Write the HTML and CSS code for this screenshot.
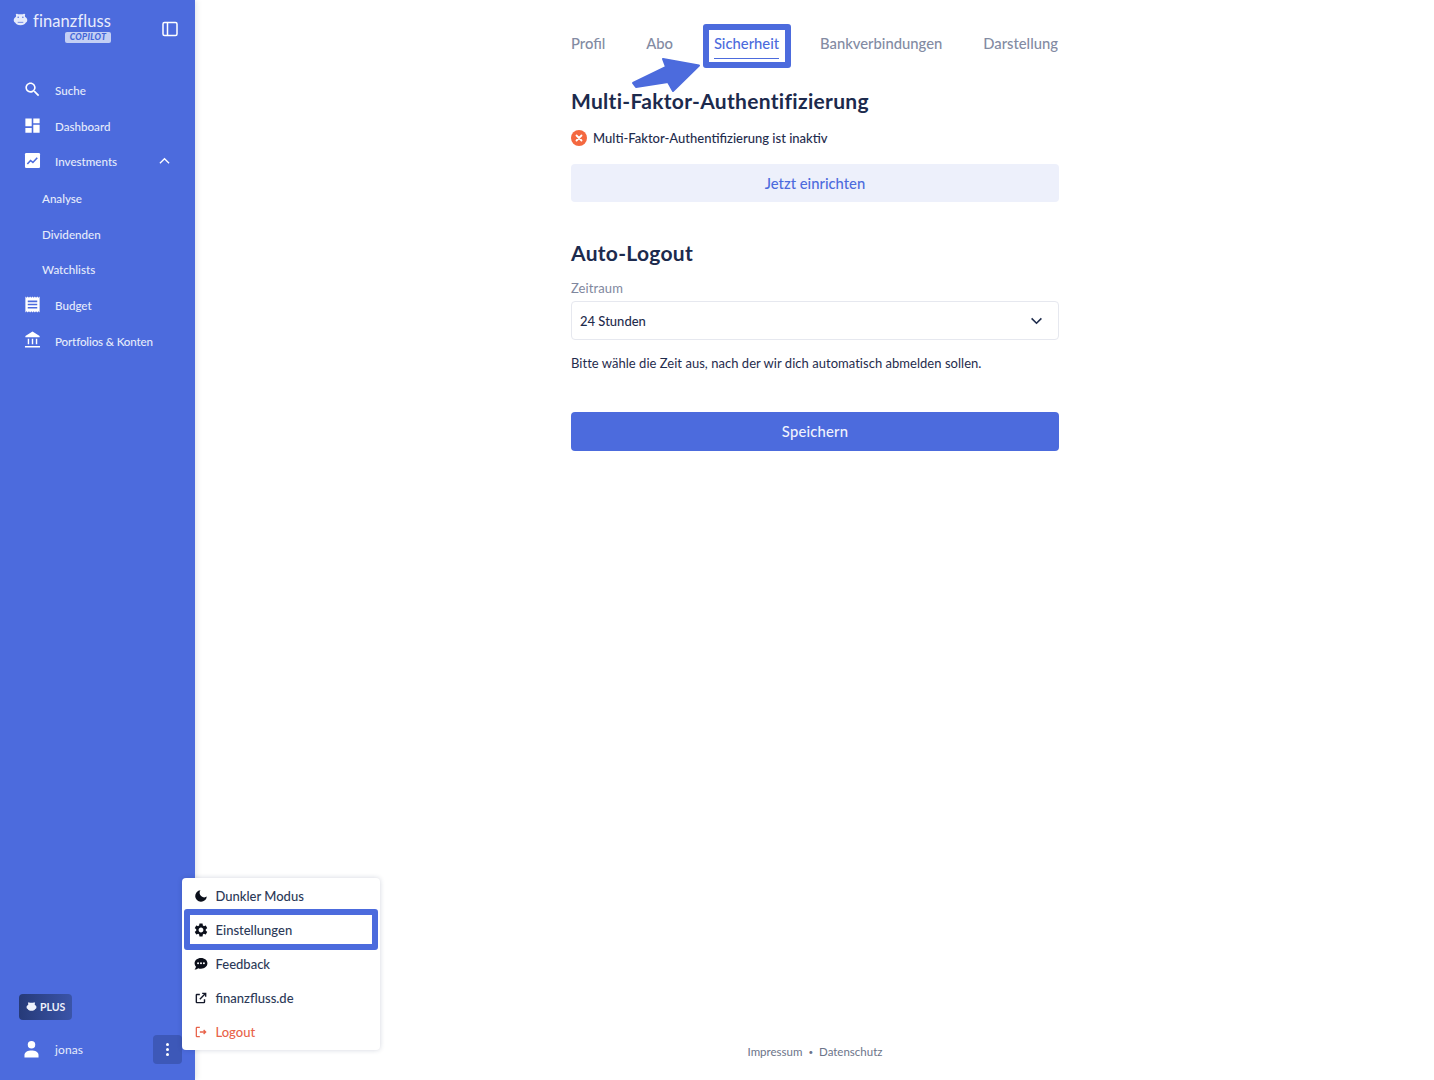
FILE: index.html
```html
<!DOCTYPE html>
<html lang="de">
<head>
<meta charset="utf-8">
<title>Sicherheit</title>
<link rel="stylesheet" href="styles.css">
</head>
<body>
<div class="app">
  <aside class="sidebar">
    <header class="brand">
      <div class="logo">
        <div class="logo-top">
          <svg class="hippo" viewBox="0 0 16 14"><path d="M3 1.200a1.300 1.300 0 0 1 2.400-.3h5.200A1.300 1.300 0 0 1 13 1.200c0 .4-.1.7-.3 1l.3 1.600c1.200.6 2.200 1.700 2.200 3.400 0 1.300-.6 2.200-1.700 2.700-.7 1.500-2.400 2.600-5.500 2.600s-4.800-1.100-5.500-2.600C1.400 9.400.8 8.500.8 7.200.8 5.500 1.800 4.400 3 3.800l.3-1.600c-.2-.3-.3-.6-.3-1z" fill="currentColor"/><circle cx="5.500" cy="4" r=".8" fill="#4c6bdd"/><circle cx="10.500" cy="4" r=".8" fill="#4c6bdd"/><path d="M5 9.500h6" stroke="#4c6bdd" stroke-width=".8"/></svg>
          <span class="logo-name">finanzfluss</span>
        </div>
        <span class="copilot">COPILOT</span>
      </div>
      <svg class="panel" viewBox="0 0 16 16"><rect x="1" y="1.500" width="14" height="13" rx="1.500" fill="none" stroke="currentColor" stroke-width="1.500"/><path d="M5.500 2v12" stroke="currentColor" stroke-width="1.500"/></svg>
    </header>
    <nav class="nav">
      <a class="nav-item"><svg class="nav-icon" viewBox="0 0 24 24"><path d="M15.500 14h-.79l-.28-.27C15.410 12.590 16 11.110 16 9.500 16 5.910 13.090 3 9.500 3S3 5.910 3 9.500 5.910 16 9.500 16c1.610 0 3.090-.59 4.230-1.570l.27.28v.79l5 4.990L20.490 19l-4.990-5zm-6 0C7.010 14 5 11.990 5 9.500S7.010 5 9.500 5 14 7.010 14 9.500 11.990 14 9.500 14z"/></svg>Suche</a>
      <a class="nav-item"><svg class="nav-icon" viewBox="0 0 24 24"><path d="M3 13h8V3H3v10zm0 8h8v-6H3v6zm10 0h8V11h-8v10zm0-18v6h8V3h-8z"/></svg>Dashboard</a>
      <a class="nav-item nav-open"><svg class="nav-icon" viewBox="0 0 24 24"><path d="M4 2.500h16a1.500 1.500 0 0 1 1.500 1.500v16a1.500 1.500 0 0 1-1.500 1.500H4A1.500 1.500 0 0 1 2.500 20V4A1.500 1.500 0 0 1 4 2.500z"/><path d="M5.500 16.500l4-4.500 3 2.500 5.500-6" fill="none" stroke="#4c6bdd" stroke-width="2"/></svg>Investments<svg class="caret" viewBox="0 0 12 8"><path d="M1 6.500l5-5 5 5" fill="none" stroke="currentColor" stroke-width="1.400"/></svg></a>
      <a class="nav-sub">Analyse</a>
      <a class="nav-sub">Dividenden</a>
      <a class="nav-sub">Watchlists</a>
      <a class="nav-item"><svg class="nav-icon" viewBox="0 0 24 24"><path d="M18 17H6v-2h12v2zm0-4H6v-2h12v2zm0-4H6V7h12v2zM3 22l1.500-1.500L6 22l1.500-1.500L9 22l1.500-1.500L12 22l1.500-1.500L15 22l1.500-1.500L18 22l1.500-1.500L21 22V2l-1.500 1.500L18 2l-1.500 1.500L15 2l-1.500 1.500L12 2l-1.500 1.500L9 2 7.500 3.500 6 2 4.500 3.500 3 2v20z"/></svg>Budget</a>
      <a class="nav-item nav-long"><svg class="nav-icon" viewBox="0 0 24 24"><path d="M12 2L3 7.500V9h18V7.500L12 2zM6 11v7h1.800v-7H6zm5.100 0v7h1.800v-7h-1.800zm5.100 0v7H18v-7h-1.800zM2.500 20.200h19V22h-19z"/></svg>Portfolios &amp; Konten</a>
    </nav>
    <div class="side-bottom">
      <span class="plus"><svg class="plus-hippo" viewBox="0 0 16 14"><path d="M3 1.200a1.300 1.300 0 0 1 2.400-.3h5.200A1.300 1.300 0 0 1 13 1.200l-.3 2.600c1.200.6 2.500 1.700 2.500 3.400 0 1.300-.6 2.200-1.700 2.700-.7 1.500-2.400 2.600-5.500 2.600s-4.800-1.100-5.500-2.600C1.400 9.400.8 8.500.8 7.200.8 5.500 2.100 4.400 3.300 3.800L3 1.200z" fill="currentColor"/></svg>PLUS</span>
      <div class="user">
        <svg class="user-icon" viewBox="0 0 16 18"><circle cx="8" cy="4.500" r="4"/><path d="M0.500 18v-2.500C.5 12 4.500 10.500 8 10.500s7.500 1.500 7.500 5V18z"/></svg>
        <span class="user-name">jonas</span>
        <span class="kebab"><i></i><i></i><i></i></span>
      </div>
    </div>
  </aside>

  <main class="main">
    <div class="column">
      <nav class="tabs">
        <a class="tab">Profil</a>
        <a class="tab">Abo</a>
        <a class="tab tab-active">Sicherheit</a>
        <a class="tab">Bankverbindungen</a>
        <a class="tab">Darstellung</a>
      </nav>
      <section class="mfa">
        <h2 class="title">Multi-Faktor-Authentifizierung</h2>
        <p class="status">
          <svg class="status-icon" viewBox="0 0 16 16"><circle cx="8" cy="8" r="8" fill="#f4683f"/><path d="M5.500 5.500l5 5m0-5l-5 5" stroke="#fff" stroke-width="1.800" stroke-linecap="round"/></svg>
          Multi-Faktor-Authentifizierung ist inaktiv
        </p>
        <button class="btn-soft">Jetzt einrichten</button>
      </section>
      <section class="logout">
        <h2 class="title">Auto-Logout</h2>
        <div class="field-label">Zeitraum</div>
        <div class="select">24 Stunden<svg class="chevron" viewBox="0 0 14 9"><path d="M1.500 1.500L7 7l5.500-5.500" fill="none" stroke="currentColor" stroke-width="1.800"/></svg></div>
        <p class="hint">Bitte wähle die Zeit aus, nach der wir dich automatisch abmelden sollen.</p>
        <button class="btn-primary">Speichern</button>
      </section>
    </div>
    <footer class="footer"><a>Impressum</a><span class="dot">•</span><a>Datenschutz</a></footer>
  </main>
</div>

<svg class="arrow" viewBox="0 0 70 36"><path d="M2 26L35 10 32 2 68 8.500 42 34 37 25 5 30z" fill="#4c6bdd" stroke="#4c6bdd" stroke-width="2" stroke-linejoin="round"/></svg>
<div class="mark mark-tab"></div>

<div class="menu">
  <a class="menu-item"><svg class="menu-icon" viewBox="0 0 24 24"><path d="M11 2a10 10 0 1 0 11 11 8 8 0 0 1-11-11z"/></svg>Dunkler Modus</a>
  <a class="menu-item"><svg class="menu-icon gear" viewBox="0 0 24 24"><path d="M19.140 12.940c.04-.3.06-.61.06-.94 0-.32-.02-.64-.07-.94l2.030-1.580c.18-.14.23-.41.12-.61l-1.920-3.320c-.12-.22-.37-.29-.59-.22l-2.390.96c-.5-.38-1.030-.7-1.620-.94l-.36-2.540c-.04-.24-.24-.41-.48-.41h-3.840c-.24 0-.43.17-.47.41l-.36 2.540c-.59.24-1.130.57-1.620.94l-2.390-.96c-.22-.08-.47 0-.59.22L2.740 8.870c-.12.21-.08.47.12.61l2.030 1.580c-.05.3-.09.63-.09.94s.02.64.07.94l-2.030 1.580c-.18.14-.23.41-.12.61l1.920 3.320c.12.22.37.29.59.22l2.390-.96c.5.38 1.030.7 1.620.94l.36 2.540c.05.24.24.41.48.41h3.840c.24 0 .44-.17.47-.41l.36-2.540c.59-.24 1.130-.56 1.620-.94l2.390.96c.22.08.47 0 .59-.22l1.920-3.320c.12-.22.07-.47-.12-.61l-2.010-1.580zM12 15.600c-1.980 0-3.600-1.620-3.600-3.600s1.620-3.600 3.600-3.600 3.600 1.620 3.600 3.600-1.620 3.600-3.600 3.600z"/></svg>Einstellungen</a>
  <a class="menu-item"><svg class="menu-icon" viewBox="0 0 24 24"><path d="M12 1.500C5.700 1.500 1 5.600 1 10.800c0 2.300.9 4.300 2.500 5.900-.4 1.900-1.500 3.600-2.500 4.800 2.500 0 4.800-1 6.200-2.300 1.500.6 3.100.9 4.800.9 6.300 0 11-4.100 11-9.300S18.300 1.500 12 1.500z"/><circle cx="7" cy="10.800" r="1.700" fill="#fff"/><circle cx="12" cy="10.800" r="1.700" fill="#fff"/><circle cx="17" cy="10.800" r="1.700" fill="#fff"/></svg>Feedback</a>
  <a class="menu-item"><svg class="menu-icon" viewBox="0 0 24 24"><path d="M18 14v5a1 1 0 0 1-1 1H5a1 1 0 0 1-1-1V7a1 1 0 0 1 1-1h5M14 4h6v6M20 4L10 14" fill="none" stroke="currentColor" stroke-width="2.400"/></svg>finanzfluss.de</a>
  <a class="menu-item menu-danger"><svg class="menu-icon" viewBox="0 0 24 24"><path d="M10 4H5a1 1 0 0 0-1 1v14a1 1 0 0 0 1 1h5M10 12h10M16.500 8.500L20 12l-3.500 3.500" fill="none" stroke="currentColor" stroke-width="2.200"/></svg>Logout</a>
</div>
<div class="mark mark-menu"></div>
</body>
</html>
```

FILE: styles.css
```css
* { box-sizing: border-box; }
html, body { margin: 0; height: 100%; }
body {
  font-family: Lato, "Noto Sans", sans-serif;
  color: #1f2c4d;
  background: #fff;
  overflow: hidden;
}
a { color: inherit; text-decoration: none; }

.app { display: flex; height: 1080px; }

/* Sidebar */
.sidebar {
  width: 195px;
  flex: none;
  background: #4c6bdd;
  color: #e6ebfb;
  display: flex;
  flex-direction: column;
  box-shadow: 1px 0 6px rgba(30, 44, 90, 0.15);
}
.brand {
  display: flex;
  justify-content: space-between;
  padding: 12px 17px 0 13px;
  height: 73px;
}
.logo { width: 98px; display: flex; flex-direction: column; }
.logo-top { display: flex; align-items: center; gap: 5px; height: 18px; }
.hippo { width: 15px; height: 14px; flex: none; margin-bottom: 3px; }
.logo-name { font-size: 16.500px; letter-spacing: 0.1px; color: #e9edfc; white-space: nowrap; }
.copilot {
  align-self: flex-end;
  margin-top: 2px;
  width: 46px;
  height: 11px;
  border-radius: 2px;
  background: #c3cff4;
  color: #4064d8;
  font-size: 8.500px;
  line-height: 11px;
  font-weight: 900;
  font-style: italic;
  text-align: center;
  letter-spacing: 0.4px;
}
.panel { width: 16px; height: 16px; margin-top: 9px; color: #fff; }

.nav { display: flex; flex-direction: column; }
.nav-item, .nav-sub {
  display: flex;
  align-items: center;
  height: 35.800px;
  font-size: 11.600px;
  font-weight: 500;
}
.nav-item { padding-left: 23px; }
.nav-sub { padding-left: 42px; }
.nav-long { letter-spacing: -0.15px; }
.nav-open { padding-bottom: 1.500px; }
.nav-icon { width: 19px; height: 19px; margin-right: 13px; fill: #fff; flex: none; margin-top: -3px; }
.nav-open .nav-icon { margin-top: -1.500px; }
.nav-open .caret { margin-top: -0.500px; }
.caret { width: 11px; height: 8px; margin-left: auto; margin-right: 25px; color: #fff; }

.side-bottom { margin-top: auto; padding: 0 13px 16px 19px; }
.plus {
  display: inline-flex;
  align-items: center;
  gap: 3px;
  width: 53px;
  height: 26px;
  padding: 0 0 1px 7px;
  border-radius: 4px;
  background: linear-gradient(90deg, #263a78, #3a54a8);
  color: #eef1fc;
  font-size: 10.500px;
  font-weight: 700;
}
.plus-hippo { width: 11px; height: 10px; flex: none; }
.user { display: flex; align-items: center; margin-top: 15px; height: 29px; }
.user-icon { width: 15px; height: 18px; fill: #fff; margin: -2px 16px 0 5px; }
.user-name { font-size: 12px; letter-spacing: 0.1px; }
.kebab {
  margin-left: auto;
  width: 29px;
  height: 29px;
  border-radius: 4px;
  background: #3d58b8;
  display: flex;
  flex-direction: column;
  align-items: center;
  justify-content: center;
  gap: 2px;
}
.kebab i { width: 3px; height: 3px; border-radius: 50%; background: #fff; }

/* Main */
.main {
  flex: 1;
  display: flex;
  flex-direction: column;
  align-items: center;
}
.column { width: 488px; margin-left: 1px; }
.tabs {
  display: flex;
  justify-content: space-between;
  height: 87px;
  padding: 34px 1px 0 0;
  font-size: 14.800px;
  font-weight: 500;
  color: #838ba3;
}
.tab { height: 25px; line-height: 19px; white-space: nowrap; }
.tab-active {
  color: #4c6bdd;
  border-bottom: 1.500px solid #4c6bdd;
}
.title {
  margin: 0;
  font-size: 21px;
  line-height: 28px;
  font-weight: 700;
  color: #1c2a4d;
  letter-spacing: 0.3px;
}
.status {
  display: flex;
  align-items: center;
  gap: 6px;
  margin: 13px 0 0;
  height: 20px;
  font-size: 13px;
  font-weight: 500;
}
.status-icon { width: 16px; height: 16px; }
.btn-soft, .btn-primary {
  display: block;
  width: 100%;
  border: 0;
  border-radius: 4px;
  font-family: inherit;
  font-size: 14.800px;
  font-weight: 500;
}
.btn-soft {
  margin-top: 16px;
  height: 38px;
  padding-bottom: 2px;
  background: #edf0fb;
  color: #4c6bdd;
}
.logout { margin-top: 37px; }
.field-label { margin-top: 12px; font-size: 13px; line-height: 18px; color: #7f879e; letter-spacing: 0.1px; }
.select {
  display: flex;
  align-items: center;
  justify-content: space-between;
  margin-top: 4px;
  height: 39px;
  padding: 0 15px 0 8px;
  border: 1px solid #e6e8ef;
  border-radius: 4px;
  font-size: 13px;
  font-weight: 500;
}
.chevron { width: 13px; height: 8px; }
.hint { margin: 14px 0 0; font-size: 13px; line-height: 18px; letter-spacing: 0.03px; }
.btn-primary {
  margin-top: 40px;
  height: 39px;
  padding-bottom: 3px;
  background: #4c6bdd;
  color: #f0f3fd;
  letter-spacing: 0.2px;
}
.footer {
  margin-top: auto;
  margin-bottom: 21px;
  margin-left: 1px;
  display: flex;
  gap: 6px;
  font-size: 11.500px;
  line-height: 14px;
  color: #6c7489;
}
.dot { font-size: 8px; }

/* Overlays */
.menu {
  position: absolute;
  left: 182px;
  top: 878px;
  width: 198px;
  height: 172px;
  padding: 1px 0;
  background: #fff;
  border-radius: 4px;
  box-shadow: 0 0 5px rgba(30, 44, 90, 0.2);
  display: flex;
  flex-direction: column;
}
.menu-item {
  display: flex;
  align-items: center;
  height: 34.200px;
  padding-left: 12px;
  font-size: 13px;
  font-weight: 500;
  color: #2c3958;
}
.menu-icon { width: 14px; height: 14px; margin-right: 7.500px; fill: #0b0f1a; color: #14192a; flex: none; }
.gear { width: 16px; height: 16px; margin-left: -1px; margin-right: 6.500px; }
.menu-danger { color: #e8634a; }
.menu-danger .menu-icon { color: #e8634a; }
.mark {
  position: absolute;
  border-style: solid;
  border-color: #4c6bdd;
  border-radius: 3px;
  pointer-events: none;
}
.mark-tab { left: 703px; top: 24px; width: 88px; height: 44px; border-width: 6px; }
.mark-menu { left: 184px; top: 909px; width: 194px; height: 41px; border-width: 6px; }
.arrow { position: absolute; left: 631px; top: 57px; width: 70px; height: 36px; }
```
